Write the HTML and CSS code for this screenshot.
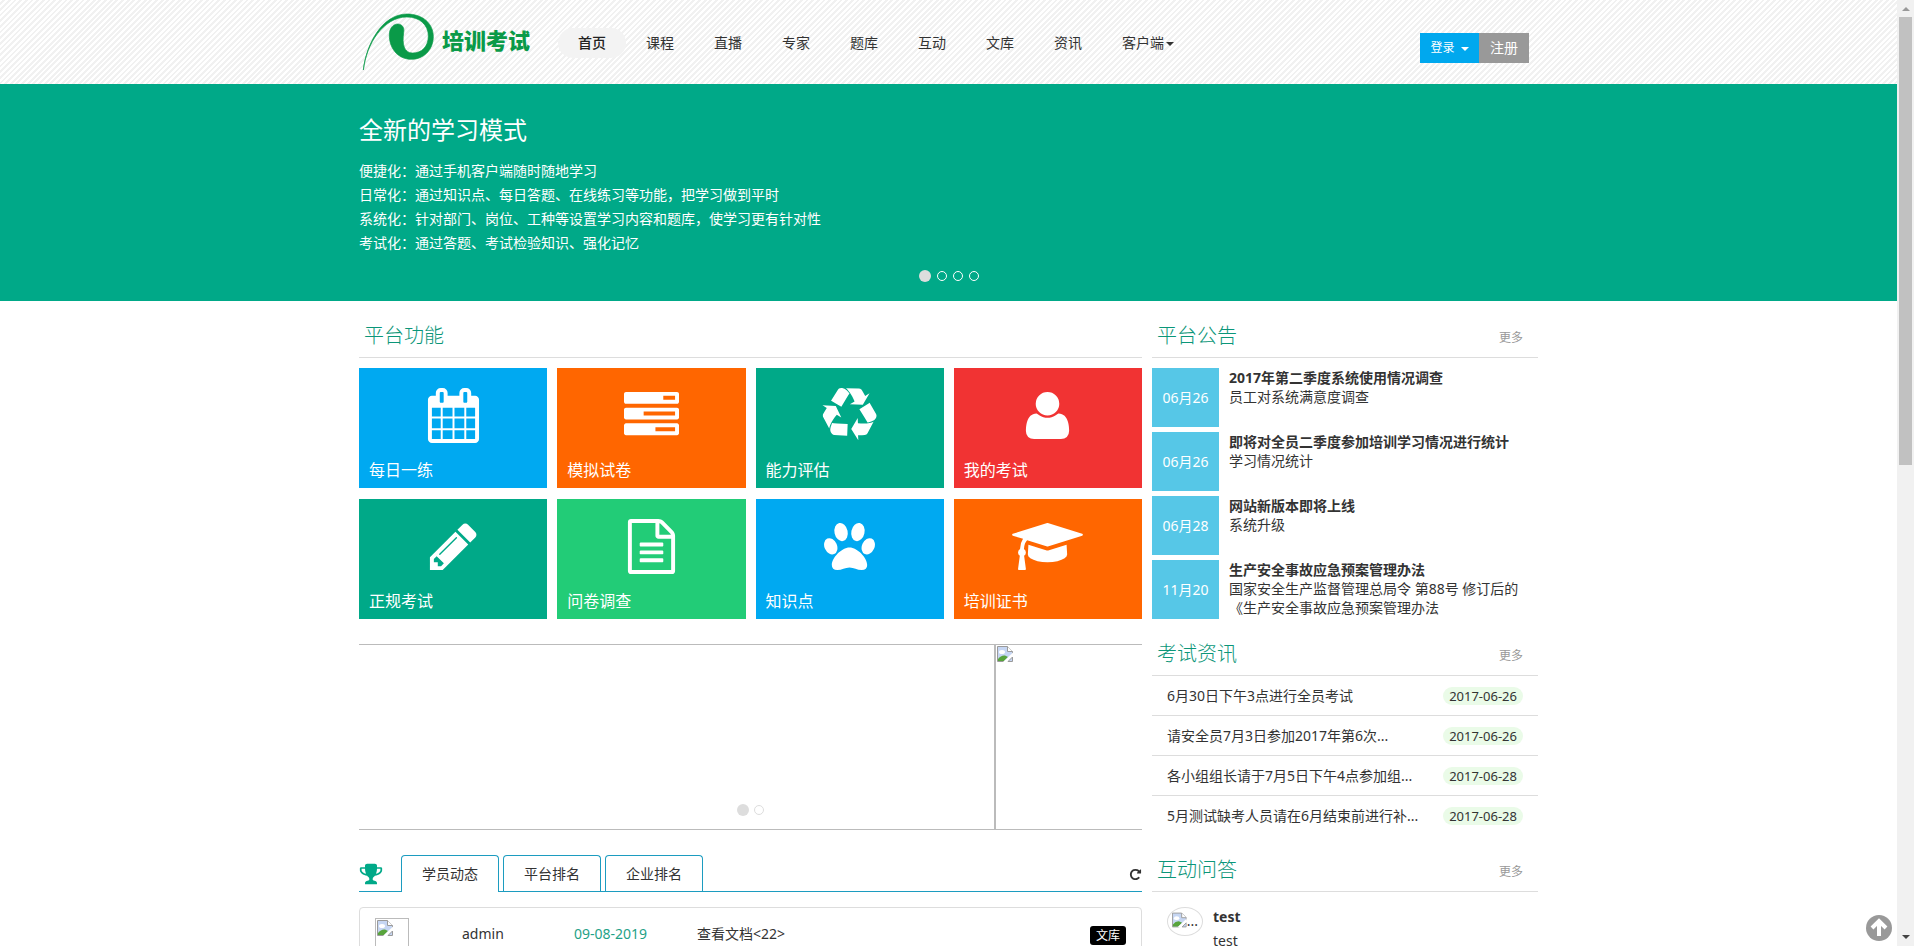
FILE: index.html
```html
<!DOCTYPE html>
<html lang="zh-CN">
<head>
<meta charset="utf-8">
<title>培训考试</title>
<link rel="stylesheet" href="styles.css">
</head>
<body>
<svg class="defs" width="0" height="0" aria-hidden="true">
  <symbol id="broken" viewBox="0 0 16 16">
    <path d="M.5.5H10.500L15.500 5.500V8L8 15.500H.5Z" fill="#c6d6f3" stroke="#9a9a9a"/>
    <path d="M10.500.5V5.500H15.500" fill="#fff" stroke="#9a9a9a"/>
    <ellipse cx="5" cy="6" rx="3" ry="2" fill="#fff"/>
    <path d="M1 15V13Q4 9 8 9.500L11 11 7 15Z" fill="#58a43c"/>
    <path d="M16 6.500 6 16H10L16 10Z" fill="#fff"/>
    <path d="M15.500 11V15.500H11Z" fill="#c6d6f3" stroke="#9a9a9a"/>
  </symbol>
</svg>

<header class="header">
  <div class="container header-inner">
    <a class="logo" href="#">
      <svg class="logo-mark" viewBox="57 36 231 180" aria-hidden="true"><path d="M70 210C78 135 125 43 200 42C250 42 280 72 280 110C280 150 250 178 215 178C170 178 147 140 148 105C148 84 160 72 173 72C187 72 194 84 191 98C186 132 192 159 218 159C245 159 265 140 265 108C265 75 240 51 200 51C130 52 80 130 70 210Z" fill="#0a9a48" stroke="#0a9a48" stroke-width="2"/></svg>
      <span class="logo-text">培训考试</span>
    </a>
    <nav class="nav">
      <a class="active" href="#">首页</a><a href="#">课程</a><a href="#">直播</a><a href="#">专家</a><a href="#">题库</a><a href="#">互动</a><a href="#">文库</a><a href="#">资讯</a><a href="#">客户端<i class="caret"></i></a>
    </nav>
    <div class="auth">
      <button class="login" type="button">登录<i class="caret"></i></button><button class="register" type="button">注册</button>
    </div>
  </div>
</header>

<section class="banner">
  <div class="container banner-inner">
    <h1>全新的学习模式</h1>
    <p>便捷化：通过手机客户端随时随地学习</p>
    <p>日常化：通过知识点、每日答题、在线练习等功能，把学习做到平时</p>
    <p>系统化：针对部门、岗位、工种等设置学习内容和题库，使学习更有针对性</p>
    <p>考试化：通过答题、考试检验知识、强化记忆</p>
    <div class="dots"><i class="on"></i><i></i><i></i><i></i></div>
  </div>
</section>

<main class="container columns">
  <div class="main-col">
    <div class="section-head"><h2>平台功能</h2></div>
    <div class="tiles">
      <a class="tile blue" href="#"><svg viewBox="0 0 1792 1792"><path d="M192 1664h288v-288h-288v288zm352 0h320v-288h-320v288zm-352-352h288v-320h-288v320zm352 0h320v-320h-320v320zm-352-384h288v-288h-288v288zm736 736h320v-288h-320v288zm-384-736h320v-288h-320v288zm768 736h288v-288h-288v288zm-384-352h320v-320h-320v320zm-352-864v-288q0-13-9.500-22.500t-22.500-9.500h-64q-13 0-22.500 9.500t-9.500 22.500v288q0 13 9.500 22.500t22.500 9.500h64q13 0 22.500-9.500t9.500-22.500zm736 864h288v-320h-288v320zm-384-384h320v-288h-320v288zm384 0h288v-288h-288v288zm32-480v-288q0-13-9.500-22.500t-22.500-9.500h-64q-13 0-22.500 9.500t-9.500 22.500v288q0 13 9.500 22.500t22.500 9.500h64q13 0 22.500-9.500t9.500-22.500zm384-64v1280q0 52-38 90t-90 38h-1408q-52 0-90-38t-38-90v-1280q0-52 38-90t90-38h128v-96q0-66 47-113t113-47h64q66 0 113 47t47 113v96h384v-96q0-66 47-113t113-47h64q66 0 113 47t47 113v96h128q52 0 90 38t38 90z"/></svg><span>每日一练</span></a>
      <a class="tile orange" href="#"><svg viewBox="0 0 1792 1792"><path d="M1024 1408h640v-128h-640v128zm-384-512h1024v-128h-1024v128zm640-512h384v-128h-384v128zm512 832v256q0 26-19 45t-45 19h-1664q-26 0-45-19t-19-45v-256q0-26 19-45t45-19h1664q26 0 45 19t19 45zm0-512v256q0 26-19 45t-45 19h-1664q-26 0-45-19t-19-45v-256q0-26 19-45t45-19h1664q26 0 45 19t19 45zm0-512v256q0 26-19 45t-45 19h-1664q-26 0-45-19t-19-45v-256q0-26 19-45t45-19h1664q26 0 45 19t19 45z"/></svg><span>模拟试卷</span></a>
      <a class="tile teal" href="#"><svg viewBox="0 0 1792 1792"><path d="M836 1169l-15 368-2 22-420-29q-36-3-67-31.500t-47-65.500q-11-27-14.500-55t4-65 12-55 21.500-64 19-53q78 12 509 28zm-387-586l180 379-147-92q-63 72-111.500 144.500t-72.500 125-39.500 94.500-18.500 63l-4 21-190-357q-17-26-18-56t6-47l8-18q35-63 114-188l-140-86zm1231 517l-188 359q-12 29-36.500 46.500t-43.500 20.500l-18 4q-71 7-219 12l8 164-230-367 211-362 7 173q170 16 283 5t170-33zm-785-924q-47 63-265 435l-317-187-19-12 225-356q20-31 60-45t80-10q24 2 48.500 12t42 21 41.500 33 36 34.500 36 39.500 32 35zm655 307l212 363q18 37 12.500 76t-27.500 74q-13 20-33 37t-38 28-48.500 22-47 16-51.500 14-46 12q-34-72-265-436l313-195zm-143-226l142-83-220 373-419-20 151-86q-34-89-75-166t-75.500-123.500-64.500-80-47-46.500l-17-13 405 1q31-3 58 10.500t39 28.500l11 15q39 61 112 190z"/></svg><span>能力评估</span></a>
      <a class="tile red" href="#"><svg viewBox="0 0 1792 1792"><path d="M1600 1405q0 120-73 189.500t-194 69.500h-874q-121 0-194-69.500t-73-189.500q0-53 3.500-103.500t14-109 26.500-108.500 43-97.500 62-81 85.500-53.500 111.500-20q9 0 42 21.500t74.500 48 108 48 133.500 21.500 133.500-21.500 108-48 74.500-48 42-21.500q61 0 111.500 20t85.500 53.500 62 81 43 97.500 26.500 108.500 14 109 3.500 103.500zm-320-893q0 159-112.500 271.500t-271.500 112.500-271.500-112.500-112.500-271.500 112.500-271.500 271.500-112.500 271.500 112.500 112.500 271.500z"/></svg><span>我的考试</span></a>
      <a class="tile teal" href="#"><svg viewBox="0 0 1792 1792"><path d="M491 1536l91-91-235-235-91 91v107h128v128h107zm523-928q0-22-22-22-10 0-17 7l-542 542q-7 7-7 17 0 22 22 22 10 0 17-7l542-542q7-7 7-17zm-54-192l416 416-832 832h-416v-416zm683 96q0 53-37 90l-166 166-416-416 166-165q36-38 90-38 53 0 91 38l235 234q37 39 37 91z"/></svg><span>正规考试</span></a>
      <a class="tile green" href="#"><svg viewBox="0 0 1792 1792"><path d="M1596 380q28 28 48 76t20 88v1152q0 40-28 68t-68 28h-1344q-40 0-68-28t-28-68v-1600q0-40 28-68t68-28h896q40 0 88 20t76 48zm-444-244v376h376q-10-29-22-41l-313-313q-12-12-41-22zm384 1528v-1024h-416q-40 0-68-28t-28-68v-416h-768v1536h1280zm-1024-864q0-14 9-23t23-9h704q14 0 23 9t9 23v64q0 14-9 23t-23 9h-704q-14 0-23-9t-9-23v-64zm736 224q14 0 23 9t9 23v64q0 14-9 23t-23 9h-704q-14 0-23-9t-9-23v-64q0-14 9-23t23-9h704zm0 256q14 0 23 9t9 23v64q0 14-9 23t-23 9h-704q-14 0-23-9t-9-23v-64q0-14 9-23t23-9h704z"/></svg><span>问卷调查</span></a>
      <a class="tile blue" href="#"><svg viewBox="0 0 1792 1792"><ellipse cx="622" cy="424" rx="215" ry="300" transform="rotate(-12 622 424)"/><ellipse cx="1170" cy="424" rx="215" ry="300" transform="rotate(12 1170 424)"/><ellipse cx="285" cy="890" rx="205" ry="275" transform="rotate(-24 285 890)"/><ellipse cx="1507" cy="890" rx="205" ry="275" transform="rotate(24 1507 890)"/><path d="M896 930C640 930 320 1270 320 1500Q320 1664 500 1664C650 1664 750 1580 896 1580S1142 1664 1292 1664Q1472 1664 1472 1500C1472 1270 1152 930 896 930Z"/></svg><span>知识点</span></a>
      <a class="tile orange" href="#"><svg class="wide" viewBox="0 0 2304 1792"><path d="M1774 836l18 316q4 69-82 128t-235 93.500-323 34.500-323-34.500-235-93.500-82-128l18-316 574 181q22 7 48 7t48-7zm530-324q0 23-22 31l-1120 352q-4 1-10 1t-10-1l-652-206q-43 34-71 111.500t-34 178.500q63 36 63 109 0 69-58 107l58 433q2 14-8 25-9 11-24 11h-192q-15 0-24-11-10-11-8-25l58-433q-58-38-58-107 0-73 65-111 11-207 98-330l-333-104q-22-8-22-31t22-31l1120-352q4-1 10-1t10 1l1120 352q22 8 22 31z"/></svg><span>培训证书</span></a>
    </div>

    <div class="gallery">
      <div class="slide"></div>
      <div class="slide"><svg class="broken"><use href="#broken"/></svg></div>
      <div class="dots light"><i class="on"></i><i></i></div>
    </div>

    <div class="tabs">
      <svg class="trophy" viewBox="0 0 1792 1792"><path d="M522 883q-74-162-74-371h-256v96q0 78 94.500 162t235.500 113zm1078-275v-96h-256q0 209-74 371 141-29 235.500-113t94.500-162zm128-128v128q0 71-41.500 143t-112 130-173 97.500-215.500 44.500q-42 54-95 95-38 34-52.500 72.500t-14.500 89.500q0 54 30.500 91t97.500 37q75 0 133.500 45.500t58.500 114.500v64q0 14-9 23t-23 9h-832q-14 0-23-9t-9-23v-64q0-69 58.500-114.500t133.500-45.500q67 0 97.500-37t30.500-91q0-51-14.500-89.500t-52.500-72.500q-53-41-95-95-113-5-215.500-44.500t-173-97.500-112-130-41.500-143v-128q0-40 28-68t68-28h288v-96q0-66 47-113t113-47h576q66 0 113 47t47 113v96h288q40 0 68 28t28 68z"/></svg>
      <button class="tab current" type="button">学员动态</button>
      <button class="tab" type="button">平台排名</button>
      <button class="tab" type="button">企业排名</button>
      <button class="refresh" type="button" aria-label="刷新"><svg viewBox="0 0 1792 1792"><path d="M1664 256v448q0 26-19 45t-45 19h-448q-42 0-59-40-17-39 14-69l138-138q-148-137-349-137-104 0-198.500 40.500t-163.500 109.500-109.500 163.500-40.500 198.500 40.500 198.500 109.500 163.500 163.500 109.500 198.500 40.500q119 0 225-52t179-147q7-10 23-12 15 0 25 9l137 138q9 8 9.500 20.500t-7.500 22.500q-109 132-264 204.500t-327 72.500q-156 0-298-61t-245-164-164-245-61-298 61-298 164-245 245-164 298-61q147 0 284.500 55.500t244.500 156.500l130-129q29-31 70-14 39 17 39 59z"/></svg></button>
    </div>

    <div class="feed">
      <div class="feed-avatar"><svg class="broken"><use href="#broken"/></svg></div>
      <span class="feed-name">admin</span>
      <span class="feed-date">09-08-2019</span>
      <span class="feed-text">查看文档&lt;22&gt;</span>
      <span class="feed-label">文库</span>
    </div>
  </div>

  <aside class="side-col">
    <div class="section-head"><h2>平台公告</h2><a href="#">更多</a></div>
    <ul class="notices">
      <li><time>06月26</time><div><b>2017年第二季度系统使用情况调查</b><p>员工对系统满意度调查</p></div></li>
      <li><time>06月26</time><div><b>即将对全员二季度参加培训学习情况进行统计</b><p>学习情况统计</p></div></li>
      <li><time>06月28</time><div><b>网站新版本即将上线</b><p>系统升级</p></div></li>
      <li><time>11月20</time><div><b>生产安全事故应急预案管理办法</b><p>国家安全生产监督管理总局令 第88号 修订后的《生产安全事故应急预案管理办法</p></div></li>
    </ul>

    <div class="section-head"><h2>考试资讯</h2><a href="#">更多</a></div>
    <ul class="news">
      <li><a href="#">6月30日下午3点进行全员考试</a><time>2017-06-26</time></li>
      <li><a href="#">请安全员7月3日参加2017年第6次...</a><time>2017-06-26</time></li>
      <li><a href="#">各小组组长请于7月5日下午4点参加组...</a><time>2017-06-28</time></li>
      <li><a href="#">5月测试缺考人员请在6月结束前进行补...</a><time>2017-06-28</time></li>
    </ul>

    <div class="section-head"><h2>互动问答</h2><a href="#">更多</a></div>
    <div class="question">
      <div class="q-avatar"><svg class="broken"><use href="#broken"/></svg><span>...</span></div>
      <div><b>test</b><p>test</p></div>
    </div>
  </aside>
</main>

<button class="to-top" type="button" aria-label="返回顶部"><svg viewBox="0 0 26 26"><circle cx="13" cy="13" r="13" fill="#999"/><path d="M6 13 13 6 20 13M13 7V21" fill="none" stroke="#fff" stroke-width="4"/></svg></button>
<div class="scrollbar" aria-hidden="true"><i class="arrow up"></i><div class="thumb"></div><i class="arrow down"></i></div>
</body>
</html>
```
FILE: styles.css
```css
* { box-sizing: border-box; }
html { height: 100%; overflow: hidden; }
body {
  height: 100%;
  margin: 0;
  padding-right: 17px;
  overflow: hidden;
  background: #fff;
  color: #333;
  font: 14px/20px "Noto Sans", "Noto Sans CJK SC", sans-serif;
}
h1, h2, p, ul { margin: 0; padding: 0; font-weight: normal; }
ul { list-style: none; }
a { color: inherit; text-decoration: none; }
button { margin: 0; padding: 0; border: 0; background: none; color: inherit; font: inherit; }
.defs { position: absolute; }
.container { max-width: 1179px; margin: 0 auto; }
.caret {
  display: inline-block;
  margin-left: 2px;
  border: 4px solid transparent;
  border-top-color: currentColor;
  border-bottom: 0;
  vertical-align: middle;
}

.header { background: repeating-linear-gradient(135deg, #fff 0 2px, #f1f1f1 2px 4px); }
.header-inner { display: flex; height: 84px; align-items: flex-start; }
.logo { display: flex; width: 199px; padding-top: 12px; gap: 6px; color: #0a9a48; }
.logo-mark { width: 77px; height: 60px; }
.logo-text { padding-top: 12px; font-size: 22px; line-height: 32px; font-weight: 900; white-space: nowrap; }
.nav { display: flex; padding-top: 28px; }
.nav a { padding: 0 20px; border-radius: 15px; line-height: 30px; white-space: nowrap; }
.nav .active { background: #f3f3f3; color: #222; font-weight: 500; }
.auth { display: flex; margin: 33px 9px 0 auto; color: #fff; }
.login { width: 59px; height: 30px; background: #00a8ee; font-size: 12px; }
.login .caret { margin-left: 6px; }
.register { width: 50px; height: 30px; background: #999; }

.banner { background: #00a988; color: #fff; }
.banner-inner { height: 217px; padding-top: 28px; position: relative; }
.banner h1 { margin-bottom: 11px; font-size: 24px; line-height: 36px; }
.banner p { line-height: 24px; }
.dots { position: absolute; left: 0; right: 0; bottom: 19px; display: flex; align-items: center; justify-content: center; gap: 6px; }
.dots i { width: 10px; height: 10px; border: 1px solid #fff; border-radius: 50%; }
.dots .on { width: 12px; height: 12px; border: 0; background: #ddd; }
.dots.light { bottom: 14px; gap: 5px; }
.dots.light i { border-color: #ddd; }

.columns { display: grid; grid-template-columns: minmax(0, 1fr) 386px; gap: 10px; padding-top: 11px; }
.section-head { display: flex; height: 46px; padding: 2px 15px 0 5px; align-items: center; justify-content: space-between; border-bottom: 1px solid #ddd; }
.section-head h2 { color: #0b9679; font-size: 20px; line-height: 30px; font-weight: 300; }
.section-head a { padding-top: 4px; color: #999; font-size: 12px; }

.tiles { display: grid; grid-template-columns: repeat(4, 1fr); gap: 11px 10px; margin-top: 10px; }
.tile { display: flex; flex-direction: column; height: 120px; padding: 20px 10px 6px; justify-content: space-between; color: #fff; font-size: 16px; line-height: 24px; }
.tile svg { width: 55px; height: 55px; align-self: center; fill: #fff; }
.tile .wide { width: 71px; }
.blue { background: #00a9f1; }
.orange { background: #f60; }
.teal { background: #00a988; }
.red { background: #f13333; }
.green { background: #22cc77; }

.gallery { position: relative; display: flex; height: 186px; margin-top: 25px; overflow: hidden; }
.slide { flex: 0 0 636px; padding: 1px; border: 1px solid #bbb; }
.slide:first-child { border-left: 0; }
.broken { display: block; width: 16px; height: 16px; }

.tabs { display: flex; height: 37px; margin-top: 25px; gap: 4px; border-bottom: 1px solid #1c9cc0; }
.trophy { width: 24px; height: 24px; margin: 7px 14px 0 0; fill: #00a988; }
.tab { width: 98px; height: 36px; border: 1px solid #1c9cc0; border-bottom: 0; border-radius: 4px 4px 0 0; background: #fff; }
.current { height: 37px; }
.refresh { width: 13px; margin-left: auto; }
.refresh svg { width: 13px; height: 13px; vertical-align: middle; fill: #333; }

.feed { display: grid; grid-template-columns: 87px 112px 123px 1fr auto; height: 96px; margin-top: 15px; padding: 10px 15px; border: 1px solid #ddd; border-radius: 4px; line-height: 32px; }
.feed-avatar { width: 34px; height: 34px; padding: 1px; border: 1px solid #bbb; }
.feed-date { color: #1fa287; }
.feed-label { height: 19px; margin-top: 8px; padding: 0 6px; border-radius: 3px; background: #000; color: #fff; font-size: 12px; line-height: 19px; }

.notices { display: grid; gap: 5px; margin: 10px 0 11px; }
.notices li { display: flex; height: 59px; gap: 10px; line-height: 19px; }
.notices time { flex: 0 0 67px; background: #56c7e7; color: #fff; line-height: 59px; text-align: center; }
.notices b { display: block; }
.notices div { padding-right: 10px; }
.news li { display: flex; height: 40px; padding: 0 15px; align-items: center; justify-content: space-between; border-bottom: 1px solid #ddd; }
.news li:last-child { border: 0; }
.news time { padding: 0 6px; border-radius: 9px; background: #eafbe8; font-size: 13px; line-height: 18px; }
.news { margin-bottom: 10px; }
.question { display: flex; gap: 10px; padding: 13px 15px; line-height: 24px; }
.q-avatar { display: flex; width: 36px; height: 29px; margin-top: 2px; padding: 4px; border: 1px solid #ddd; border-radius: 50%; line-height: 18px; }

.to-top { position: fixed; right: 22px; bottom: 5px; width: 26px; height: 26px; }
.to-top svg { display: block; }
.scrollbar { position: fixed; top: 0; right: 0; bottom: 0; display: flex; width: 17px; flex-direction: column; align-items: center; justify-content: space-between; padding: 7px 0; background: #f1f1f1; }
.thumb { width: 13px; height: 448px; margin: 6px 0 auto; background: #c1c1c1; }
.arrow { border: 4px solid transparent; }
.up { border-top: 0; border-bottom-color: #999; }
.down { border-bottom: 0; border-top-color: #444; }
```
